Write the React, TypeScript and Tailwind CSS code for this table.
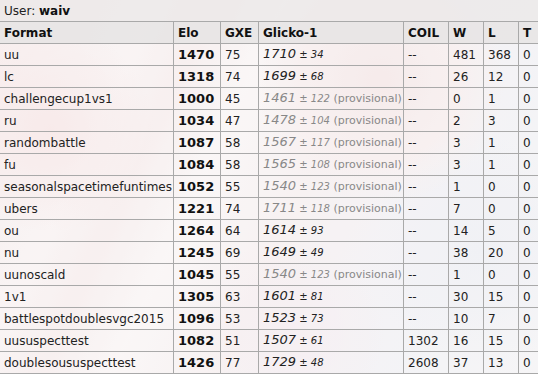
import React from "react";

type Row = {
  f: string;
  elo: number;
  gxe: number;
  g: string;
  d: string;
  prov?: boolean;
  coil: string;
  w: number;
  l: number;
  t: number;
};

const rows: Row[] = [
  { f: "uu", elo: 1470, gxe: 75, g: "1710", d: "34", coil: "--", w: 481, l: 368, t: 0 },
  { f: "lc", elo: 1318, gxe: 74, g: "1699", d: "68", coil: "--", w: 26, l: 12, t: 0 },
  { f: "challengecup1vs1", elo: 1000, gxe: 45, g: "1461", d: "122", prov: true, coil: "--", w: 0, l: 1, t: 0 },
  { f: "ru", elo: 1034, gxe: 47, g: "1478", d: "104", prov: true, coil: "--", w: 2, l: 3, t: 0 },
  { f: "randombattle", elo: 1087, gxe: 58, g: "1567", d: "117", prov: true, coil: "--", w: 3, l: 1, t: 0 },
  { f: "fu", elo: 1084, gxe: 58, g: "1565", d: "108", prov: true, coil: "--", w: 3, l: 1, t: 0 },
  { f: "seasonalspacetimefuntimes", elo: 1052, gxe: 55, g: "1540", d: "123", prov: true, coil: "--", w: 1, l: 0, t: 0 },
  { f: "ubers", elo: 1221, gxe: 74, g: "1711", d: "118", prov: true, coil: "--", w: 7, l: 0, t: 0 },
  { f: "ou", elo: 1264, gxe: 64, g: "1614", d: "93", coil: "--", w: 14, l: 5, t: 0 },
  { f: "nu", elo: 1245, gxe: 69, g: "1649", d: "49", coil: "--", w: 38, l: 20, t: 0 },
  { f: "uunoscald", elo: 1045, gxe: 55, g: "1540", d: "123", prov: true, coil: "--", w: 1, l: 0, t: 0 },
  { f: "1v1", elo: 1305, gxe: 63, g: "1601", d: "81", coil: "--", w: 30, l: 15, t: 0 },
  { f: "battlespotdoublesvgc2015", elo: 1096, gxe: 53, g: "1523", d: "73", coil: "--", w: 10, l: 7, t: 0 },
  { f: "uususpecttest", elo: 1082, gxe: 51, g: "1507", d: "61", coil: "1302", w: 16, l: 15, t: 0 },
  { f: "doublesoususpecttest", elo: 1426, gxe: 77, g: "1729", d: "48", coil: "2608", w: 37, l: 13, t: 0 },
];

const td = "border border-[#a9a9a9] px-[4px] h-[22px] p-0 align-middle whitespace-nowrap text-[12px]";
const th = "border border-[#a9a9a9] px-[4px] h-[22px] p-0 align-middle text-left font-bold text-[#111] whitespace-nowrap text-[12px]";

export default function App() {
  return (
    <div
      className="relative w-[538px] h-[374px] overflow-hidden text-[13px] leading-[16px] text-[#222]"
      style={{ fontFamily: "'DejaVu Sans', Verdana, sans-serif" }}
    >
      <div className="absolute inset-0 bg-[#f5f1f1]" />
      <div className="absolute inset-0 bg-[linear-gradient(115deg,#f6e0e0_0%,#f4e9e9_12%,#f7eeee_22%,#f3e5e5_30%,#f8f3f3_40%,#f3e9ea_55%,#eeebf0_68%,#ebecf1_80%,#f0f0f3_100%)] opacity-75" />
      <div className="absolute left-[250px] top-[-40px] w-[260px] h-[240px] rounded-full bg-[radial-gradient(circle,#f1e0e0_0%,#f4e9e9_45%,transparent_70%)]" />
      <div className="absolute left-[-60px] top-[30px] w-[220px] h-[200px] rounded-full bg-[radial-gradient(circle,#f4dfdf_0%,transparent_70%)]" />
      <div className="absolute left-[380px] top-[120px] w-[200px] h-[260px] rounded-full bg-[radial-gradient(circle,#e9eaf0_0%,transparent_70%)]" />
      <div className="absolute left-[180px] top-[250px] w-[220px] h-[160px] rounded-full bg-[radial-gradient(circle,#f2e7ec_0%,transparent_70%)]" />
      <div className="relative">
        <div className="h-[21px] pl-[4px] flex items-center bg-[#eceaea]/85 text-[#222] text-[12px]">
          User:&nbsp;<b className="text-[#111]">waiv</b>
        </div>
        <table className="border-collapse table-fixed w-[539px] -ml-[1px]">
          <colgroup>
            <col className="w-[174px]" />
            <col className="w-[47px]" />
            <col className="w-[38px]" />
            <col className="w-[145px]" />
            <col className="w-[45px]" />
            <col className="w-[35px]" />
            <col className="w-[35px]" />
            <col className="w-[20px]" />
          </colgroup>
          <thead>
            <tr className="bg-[#e8e6e6]/90">
              <th className={th}>Format</th>
              <th className={th}>Elo</th>
              <th className={th}>GXE</th>
              <th className={th}>Glicko-1</th>
              <th className={th}>COIL</th>
              <th className={th}>W</th>
              <th className={th}>L</th>
              <th className={th}>T</th>
            </tr>
          </thead>
          <tbody>
            {rows.map((r) => (
              <tr key={r.f} className="bg-white/35">
                <td className={td}>{r.f}</td>
                <td className={td + " !text-[13px] font-bold text-[#111]"}>{r.elo}</td>
                <td className={td}>{r.gxe}</td>
                <td className={td + " !text-[13px]" + (r.prov ? " text-[#888]" : " text-[#222]")}>
                  <em>{r.g}</em>
                  <small className="text-[10px]">
                    {" ± "}
                    <em>{r.d}</em>
                  </small>
                  {r.prov ? <small className="text-[11px]"> (provisional)</small> : null}
                </td>
                <td className={td}>{r.coil}</td>
                <td className={td}>{r.w}</td>
                <td className={td}>{r.l}</td>
                <td className={td}>{r.t}</td>
              </tr>
            ))}
          </tbody>
        </table>
      </div>
    </div>
  );
}
